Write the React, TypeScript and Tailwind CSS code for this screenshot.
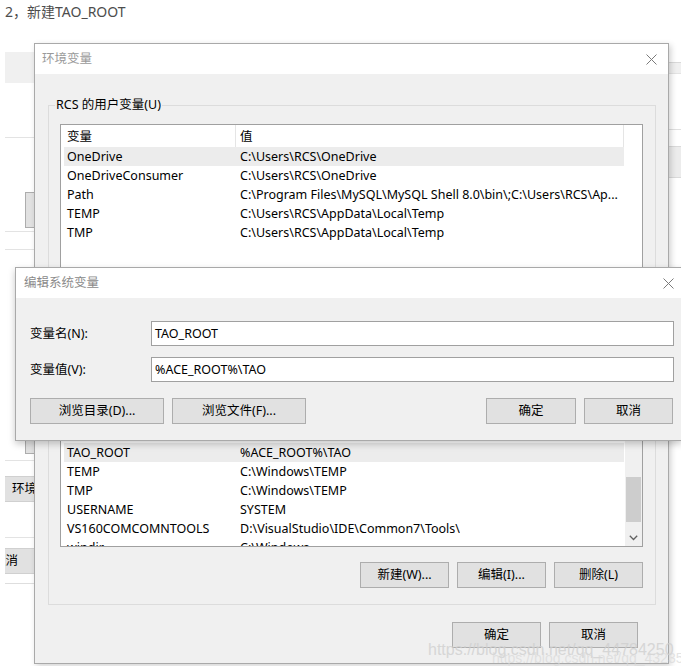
import React from "react";

const FONT = "font-['Noto_Sans','Noto_Sans_CJK_SC',sans-serif]";

function CloseX() {
  return (
    <svg width="11" height="11" viewBox="0 0 11 11">
      <line x1="0.5" y1="0.5" x2="10.5" y2="10.5" stroke="#7a7a7a" strokeWidth="1" />
      <line x1="10.5" y1="0.5" x2="0.5" y2="10.5" stroke="#7a7a7a" strokeWidth="1" />
    </svg>
  );
}

function Btn({ children, w }: { children: React.ReactNode; w: string }) {
  return (
    <div
      className={`${w} h-[26px] shrink-0 flex items-center justify-center pt-[1px] bg-[#e1e1e1] border border-[#adadad] text-[12.5px] text-black`}
    >
      {children}
    </div>
  );
}

type Row = [string, string];

function Rows({ rows, selected }: { rows: Row[]; selected: number }) {
  return (
    <div className="flex flex-col">
      {rows.map((r, i) => (
        <div
          key={i}
          className={`ml-[3px] h-[19px] shrink-0 flex items-center pt-[1px] text-[12.5px] text-black whitespace-nowrap ${
            i === selected ? "bg-[#ececec]" : ""
          }`}
        >
          <div className="w-[173px] pl-[3px] shrink-0">{r[0]}</div>
          <div className="pl-[3px] overflow-hidden">{r[1]}</div>
        </div>
      ))}
    </div>
  );
}

function Header({ a, b }: { a: string; b: string }) {
  return (
    <div className="h-[22px] flex items-center text-[12.5px] text-black shrink-0">
      <div className="w-[175px] pl-[6px] pt-[2px] h-full flex items-center border-r border-[#e5e5e5] shrink-0">
        {a}
      </div>
      <div className="pl-[4px] pt-[2px] h-full flex items-center flex-1 border-r border-[#e5e5e5]">{b}</div>
    </div>
  );
}

const userRows: Row[] = [
  ["OneDrive", "C:\\Users\\RCS\\OneDrive"],
  ["OneDriveConsumer", "C:\\Users\\RCS\\OneDrive"],
  ["Path", "C:\\Program Files\\MySQL\\MySQL Shell 8.0\\bin\\;C:\\Users\\RCS\\Ap..."],
  ["TEMP", "C:\\Users\\RCS\\AppData\\Local\\Temp"],
  ["TMP", "C:\\Users\\RCS\\AppData\\Local\\Temp"],
];

const sysRows: Row[] = [
  ["", ""],
  ["", ""],
  ["TAO_ROOT", "%ACE_ROOT%\\TAO"],
  ["TEMP", "C:\\Windows\\TEMP"],
  ["TMP", "C:\\Windows\\TEMP"],
  ["USERNAME", "SYSTEM"],
  ["VS160COMCOMNTOOLS", "D:\\VisualStudio\\IDE\\Common7\\Tools\\"],
  ["windir", "C:\\Windows"],
];

function GroupLabel({ text }: { text: string }) {
  return (
    <div className="absolute left-[6px] top-[-9px] px-[1px] bg-[#f0f0f0] text-[12.5px] leading-[16px] text-black">
      {text}
    </div>
  );
}

function MainDialog() {
  return (
    <div className="absolute left-[34px] top-[43px] w-[635px] h-[621px] border border-[#a9a9a9] bg-[#f0f0f0] shadow-[2px_2px_6px_rgba(0,0,0,0.18)] flex flex-col">
      <div className="h-[30px] bg-white flex items-center justify-between pl-[7px] pr-[11px] shrink-0">
        <span className="text-[12.5px] text-[#9a9a9a]">环境变量</span>
        <CloseX />
      </div>
      <div className="flex flex-col pl-[13px] pr-[12px]">
        {/* user group */}
        <div className="relative mt-[31px] h-[245px] border border-[#dcdcdc] pt-[18px] pl-[11px] pr-[12px]">
          <GroupLabel text="RCS 的用户变量(U)" />
          <div className="h-[170px] border border-[#a0a0a0] bg-white flex">
            <div className="w-[563px] flex flex-col">
              <Header a="变量" b="值" />
              <Rows rows={userRows} selected={0} />
            </div>
          </div>
        </div>
        {/* system group */}
        <div className="relative mt-[12px] border border-[#dcdcdc] pt-[19px] pl-[11px] pr-[12px] pb-[16px]">
          <div className="h-[165px] border border-[#a0a0a0] bg-white flex overflow-hidden">
            <div className="w-[563px] flex flex-col overflow-hidden">
              <Header a="" b="" />
              <Rows rows={sysRows} selected={2} />
            </div>
            <div className="w-[17px] ml-[1px] bg-[#f0f0f0] flex flex-col">
              <div className="h-[17px] shrink-0" />
              <div className="flex-1 flex flex-col items-center">
                <div className="mt-[77px] w-[15px] h-[45px] bg-[#cdcdcd]" />
              </div>
              <div className="h-[17px] shrink-0 flex items-center justify-center">
                <svg width="9" height="6" viewBox="0 0 9 6">
                  <polyline points="0.8,0.8 4.5,4.5 8.2,0.8" fill="none" stroke="#606060" strokeWidth="1.3" />
                </svg>
              </div>
            </div>
          </div>
          <div className="mt-[15px] flex justify-end gap-[8px]">
            <Btn w="w-[89px]">新建(W)...</Btn>
            <Btn w="w-[89px]">编辑(I)...</Btn>
            <Btn w="w-[89px]">删除(L)</Btn>
          </div>
        </div>
        <div className="mt-[17px] flex justify-end gap-[8px] pr-[18px]">
          <Btn w="w-[89px]">确定</Btn>
          <Btn w="w-[89px]">取消</Btn>
        </div>
      </div>
    </div>
  );
}

function EditDialog() {
  return (
    <div className="absolute left-[15px] top-[267px] w-[667px] h-[174px] border border-[#a9a9a9] bg-[#f0f0f0] shadow-[0_3px_7px_rgba(0,0,0,0.22)] flex flex-col">
      <div className="h-[30px] bg-white flex items-center justify-between pl-[8px] pr-[7px] shrink-0">
        <span className="text-[12.5px] text-[#8a8a8a]">编辑系统变量</span>
        <CloseX />
      </div>
      <div className="flex flex-col pl-[14px] pr-[7px]">
        <div className="mt-[23px] flex items-center">
          <div className="w-[121px] pt-[1px] text-[12.5px] text-black">变量名(N):</div>
          <div className="flex-1 h-[25px] border border-[#a0a0a0] bg-white flex items-center pl-[3px] pt-[1px] text-[12.5px] text-black">
            TAO_ROOT
          </div>
        </div>
        <div className="mt-[11px] flex items-center">
          <div className="w-[121px] pt-[1px] text-[12.5px] text-black">变量值(V):</div>
          <div className="flex-1 h-[25px] border border-[#a0a0a0] bg-white flex items-center pl-[3px] pt-[1px] text-[12.5px] text-black">
            %ACE_ROOT%\TAO
          </div>
        </div>
        <div className="mt-[16px] flex items-center pr-[1px]">
          <Btn w="w-[134px]">浏览目录(D)...</Btn>
          <div className="ml-[8px]">
            <Btn w="w-[134px]">浏览文件(F)...</Btn>
          </div>
          <div className="flex-1" />
          <Btn w="w-[90px]">确定</Btn>
          <div className="ml-[8px]">
            <Btn w="w-[89px]">取消</Btn>
          </div>
        </div>
      </div>
    </div>
  );
}

function BackLeft() {
  return (
    <div className="absolute left-[5px] top-[52px] w-[40px] flex flex-col">
      <div className="h-[31px] bg-[#f0f0f0]" />
      <div className="h-[54px]" />
      <div className="h-px bg-[#e3e3e3]" />
      <div className="h-[54px]" />
      <div className="h-[36px] ml-[20px] bg-[#e1e1e1] border border-[#adadad]" />
      <div className="h-[3px]" />
      <div className="h-px bg-[#e3e3e3]" />
      <div className="h-[17px]" />
      <div className="h-px bg-[#e3e3e3]" />
      <div className="h-[189px]" />
      <div className="h-[15px] ml-[20px] bg-[#e1e1e1] border-x border-b border-[#adadad]" />
      <div className="h-[6px]" />
      <div className="h-px bg-[#e3e3e3]" />
      <div className="h-[15px]" />
      <div className="h-[26px] bg-[#e1e1e1] border-y border-[#d0d0d0] flex items-center pl-[7px] pt-[1px] text-[12.5px] text-black whitespace-nowrap">
        环境
      </div>
      <div className="h-[35px]" />
      <div className="h-px bg-[#e3e3e3]" />
      <div className="h-[10px]" />
      <div className="h-[26px] bg-[#e1e1e1] border-y border-[#d0d0d0] flex items-center pt-[1px] text-[12.5px] text-black whitespace-nowrap overflow-hidden">
        <span className="ml-[-12px]">取消</span>
      </div>
      <div className="h-[9px]" />
      <div className="h-px bg-[#dedede]" />
    </div>
  );
}

function BackRight() {
  return (
    <div className="absolute left-[669px] top-[62px] w-[12px] flex flex-col">
      <div className="h-px bg-[#d9d9d9]" />
      <div className="h-[10px] bg-[#f0f0f0]" />
      <div className="h-px bg-[#e3e3e3]" />
      <div className="h-[55px]" />
      <div className="h-px bg-[#e0e0e0]" />
      <div className="h-[16px]" />
      <div className="h-[32px] bg-[#ececec] border-y border-[#dadada]" />
      <div className="h-[90px]" />
    </div>
  );
}

export default function App() {
  return (
    <div className={`relative w-[681px] h-[666px] overflow-hidden bg-white ${FONT}`}>
      <div className="absolute left-[5px] top-[3px] text-[14px] leading-[18px] text-[#4d4d4d]">2，新建TAO_ROOT</div>
      <BackLeft />
      <BackRight />
      <MainDialog />
      <EditDialog />
      <div className="absolute left-[428px] top-[640px] text-[16px] leading-[20px] text-[#cfcfcf]/80 font-['Liberation_Sans',sans-serif] whitespace-nowrap">
        https://blog.csdn.net/qq_44784250
      </div>
      <div className="absolute left-[492px] top-[649px] text-[14px] leading-[18px] text-[#d8d8d8]/70 font-['Liberation_Sans',sans-serif] whitespace-nowrap">
        https://blog.csdn.net/qq_43235326
      </div>
    </div>
  );
}
